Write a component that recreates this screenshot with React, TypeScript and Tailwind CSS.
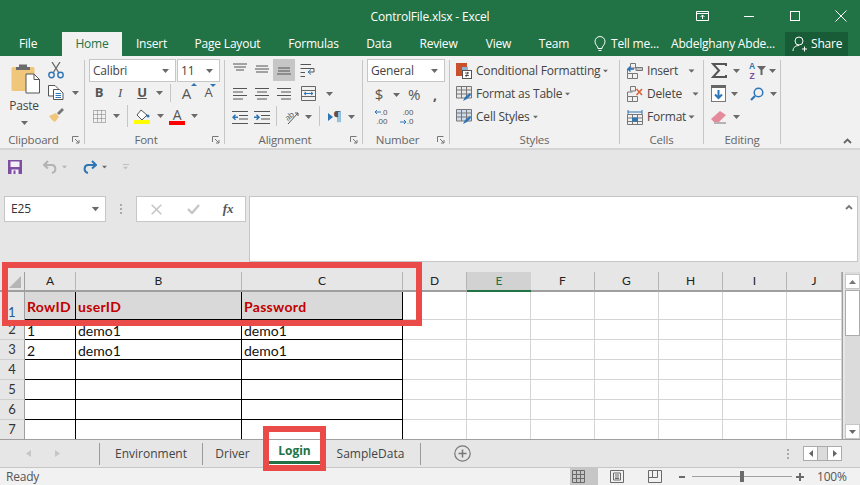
import React from "react";

const Dd = ({ className = "" }: { className?: string }) => (
  <svg width="7" height="4" viewBox="0 0 7 4" className={"shrink-0 " + className}>
    <path d="M0 0H7L3.5 4Z" fill="#6a6a6a" />
  </svg>
);

const Slot = ({ w, children, className = "" }: { w: string; children?: React.ReactNode; className?: string }) => (
  <div className={"flex items-center justify-center shrink-0 " + w + " " + className}>{children}</div>
);

const VSep = ({ className = "" }: { className?: string }) => <div className={"w-px self-stretch bg-[#c6c6c6] shrink-0 " + className} />;

const Launcher = () => (
  <svg width="8" height="8" viewBox="0 0 8 8" className="shrink-0">
    <path d="M.5 6V.5H6.5M3 3L7 7M4 7H7V4" fill="none" stroke="#777" strokeWidth="1" />
  </svg>
);

const Lines = ({ kind }: { kind: string }) => {
  const s = "#555";
  const rows: Record<string, string> = {
    top: "M0 1H14M1 4H13M3 7H11",
    mid: "M1 3H13M0 6H14M1 9H13",
    bot: "M1 5H13M1 8H13M0 11H14",
    left: "M0 1.5H14M0 5H10M0 8.5H14M0 12H10",
    center: "M0 1.5H14M2 5H12M0 8.5H14M2 12H12",
    right: "M0 1.5H14M4 5H14M0 8.5H14M4 12H14",
  };
  return (
    <svg width="14" height="14" viewBox="0 0 14 14">
      <path d={rows[kind]} stroke={s} strokeWidth="1" fill="none" />
    </svg>
  );
};

const Group = ({ w, label, launcher, children, sep = true }: { w: string; label: string; launcher?: boolean; children: React.ReactNode; sep?: boolean }) => (
  <div className={"flex shrink-0 h-full " + w}>
    <div className="flex-1 min-w-0 flex flex-col">
      <div className="flex-1 min-h-0">{children}</div>
      <div className={"relative h-[16px] flex items-center justify-center text-[11.5px] leading-none text-[#666] " + (launcher ? "pr-[17px]" : "")}>
        <span>{label}</span>
        {launcher && (
          <span className="absolute right-[4px] top-[4px]">
            <Launcher />
          </span>
        )}
      </div>
    </div>
    {sep && <div className="w-px h-[84px] mt-[4px] bg-[#c6c6c6]" />}
  </div>
);

const Combo = ({ w, text, textColor = "#444" }: { w: string; text: string; textColor?: string }) => (
  <div className={"h-[23px] bg-white border border-[#c6c6c6] flex items-center justify-between pl-[3px] pr-[6px] text-[12px] shrink-0 " + w} style={{ color: textColor }}>
    <span>{text}</span>
    <Dd />
  </div>
);

const Clipboard = () => (
  <div className="flex h-full">
    <div className="w-[46px] flex flex-col items-center pt-[7px] pl-[5px]">
      <svg width="30" height="31" viewBox="0 0 30 31">
        <rect x="0.5" y="4" width="23" height="24" rx="1.5" fill="#efc67a" />
        <path d="M8 4V1.5H16V4H19V7H5V4Z" fill="#6b6b6b" />
        <path d="M15 11H23L28.5 16.5V30H15Z" fill="#fff" stroke="#555" />
        <path d="M23 11V16.5H28.5" fill="none" stroke="#555" />
      </svg>
      <span className="text-[12px] leading-none text-[#444] mt-[6px] -ml-[3px]">Paste</span>
      <Dd className="mt-[9px] -ml-[3px]" />
    </div>
    <div className="flex flex-col pt-[6px] pl-[2px]">
      <svg width="16" height="17" viewBox="0 0 16 17">
        <path d="M4 0L11 11M12 0L5 11" stroke="#666" strokeWidth="1.3" fill="none" />
        <circle cx="3.5" cy="13" r="2.7" fill="none" stroke="#2e75b6" strokeWidth="1.4" />
        <circle cx="12.5" cy="13" r="2.7" fill="none" stroke="#2e75b6" strokeWidth="1.4" />
      </svg>
      <div className="flex items-center mt-[6px]">
        <svg width="16" height="15" viewBox="0 0 16 15">
          <path d="M.5.5H7L10 3.5V11H.5Z" fill="#fff" stroke="#555" />
          <path d="M5.5 4.5H11.5L15 8V14.5H5.5Z" fill="#fff" stroke="#555" />
          <path d="M7.5 8.5H13M7.5 10.5H13M7.5 12.5H13" stroke="#2e75b6" />
        </svg>
        <Dd className="ml-[8px]" />
      </div>
      <svg width="17" height="16" viewBox="0 0 17 16" className="mt-[7px]">
        <path d="M1 9L8 6L11 10L7 15Q3 13 1 9Z" fill="#efc67a" />
        <path d="M9 6L14 1L16 3L11 8Z" fill="#777" />
      </svg>
    </div>
  </div>
);

const Font = () => (
  <div className="flex flex-col pt-[3px] pl-[4px]">
    <div className="flex gap-px">
      <Combo w="w-[87px]" text="Calibri" />
      <Combo w="w-[43px]" text="11" />
    </div>
    <div className="flex items-center h-[18px] mt-[2px] text-[#555]">
      <Slot w="w-[20px]" className="font-bold text-[13px]">B</Slot>
      <Slot w="w-[22px]" className="italic text-[13px] font-['Liberation_Serif',serif]">I</Slot>
      <Slot w="w-[22px]" className="underline font-bold text-[13px]">U</Slot>
      <Slot w="w-[12px]"><Dd /></Slot>
      <VSep className="ml-[5px]" />
      <Slot w="w-[31px]" className="text-[15px] relative">
        A
        <svg width="6" height="3" viewBox="0 0 6 3" className="absolute top-[1px] right-[5px]"><path d="M0 3H6L3 0Z" fill="#2e75b6" /></svg>
      </Slot>
      <Slot w="w-[13px]" className="text-[13px] relative">
        A
        <svg width="6" height="3" viewBox="0 0 6 3" className="absolute top-[1px] -right-[1px]"><path d="M0 0H6L3 3Z" fill="#2e75b6" /></svg>
      </Slot>
    </div>
    <div className="flex items-center h-[22px] mt-[3px]">
      <Slot w="w-[20px]">
        <svg width="13" height="13" viewBox="0 0 13 13"><path d="M.5.5H12.5V12.5H.5ZM4.5.5V12.5M8.5.5V12.5M.5 4.5H12.5M.5 8.5H12.5" fill="none" stroke="#777" strokeDasharray="1 1" /></svg>
      </Slot>
      <Slot w="w-[15px]"><Dd /></Slot>
      <VSep className="ml-[3px]" />
      <Slot w="w-[28px]">
        <svg width="16" height="15" viewBox="0 0 16 15">
          <path d="M7 1L13 6L8 11L3 6Z" fill="#fff" stroke="#555" />
          <circle cx="14" cy="7" r="1.5" fill="#2e75b6" />
          <rect x="0" y="11" width="16" height="4" fill="#ffff00" />
        </svg>
      </Slot>
      <Slot w="w-[8px]"><Dd /></Slot>
      <Slot w="w-[26px]">
        <div className="flex flex-col items-center">
          <span className="text-[14px] leading-[13px] text-[#555]">A</span>
          <div className="w-[16px] h-[4px] bg-[#ff0000]" />
        </div>
      </Slot>
      <Slot w="w-[8px]"><Dd /></Slot>
    </div>
  </div>
);

const Alignment = () => (
  <div className="flex flex-col pt-[3px] pl-[4px]">
    <div className="flex items-center h-[22px]">
      <Slot w="w-[22px]"><Lines kind="top" /></Slot>
      <Slot w="w-[22px]"><Lines kind="mid" /></Slot>
      <Slot w="w-[22px]" className="h-[22px] bg-[#c6c6c6]"><Lines kind="bot" /></Slot>
      <Slot w="w-[26px]">
        <svg width="16" height="15" viewBox="0 0 16 15"><path d="M.5 1.5H11M.5 5.5H14V9H8M.5 9.5H5M.5 13.5H5" fill="none" stroke="#555" /><path d="M11 6.5L8 9L11 11.5" fill="none" stroke="#2e75b6" /></svg>
      </Slot>
    </div>
    <div className="flex items-center h-[21px] mt-[2px]">
      <Slot w="w-[22px]"><Lines kind="left" /></Slot>
      <Slot w="w-[22px]"><Lines kind="center" /></Slot>
      <Slot w="w-[22px]"><Lines kind="right" /></Slot>
      <Slot w="w-[26px]">
        <svg width="15" height="15" viewBox="0 0 15 15"><path d="M.5.5H14.5V14.5H.5ZM.5 4.5H14.5M.5 10.5H14.5" fill="none" stroke="#666" /><path d="M3 7.5H12M5 6L3 7.5L5 9M10 6L12 7.5L10 9" fill="none" stroke="#2e75b6" /></svg>
      </Slot>
      <Slot w="w-[10px]" className="ml-[3px]"><Dd /></Slot>
    </div>
    <div className="flex items-center h-[22px] mt-[2px]">
      <Slot w="w-[22px]">
        <svg width="16" height="13" viewBox="0 0 16 13"><path d="M0 .5H16M7 4.5H16M7 8H16M0 12.5H16" stroke="#555" fill="none" /><path d="M6 6.3H1M3.5 3.8L1 6.3L3.5 8.8" stroke="#2e75b6" strokeWidth="1.5" fill="none" /></svg>
      </Slot>
      <Slot w="w-[22px]">
        <svg width="16" height="13" viewBox="0 0 16 13"><path d="M0 .5H16M7 4.5H16M7 8H16M0 12.5H16" stroke="#555" fill="none" /><path d="M0 6.3H5M2.5 3.8L5 6.3L2.5 8.8" stroke="#2e75b6" strokeWidth="1.5" fill="none" /></svg>
      </Slot>
      <VSep className="ml-[3px] h-[20px] self-center" />
      <Slot w="w-[28px]">
        <svg width="18" height="17" viewBox="0 0 18 17"><text x="3" y="11" fontSize="8" fill="#555" transform="rotate(-40 6 8)">ab</text><path d="M6 15L16 4M13 4H16V7" fill="none" stroke="#555" /></svg>
      </Slot>
      <Slot w="w-[6px]"><Dd /></Slot>
      <VSep className="ml-[8px] h-[20px] self-center" />
      <Slot w="w-[30px]" className="text-[13px] text-[#555]">
        <svg width="5" height="8" viewBox="0 0 5 8"><path d="M0 0L5 4L0 8Z" fill="#2e75b6" /></svg>¶
      </Slot>
      <Slot w="w-[3px]"><Dd /></Slot>
    </div>
  </div>
);

const decimal = "flex items-center justify-end text-[8px] leading-[9.5px] tracking-normal text-[#555] font-['Liberation_Sans',sans-serif]";

const NumberGroup = () => (
  <div className="flex flex-col pt-[3px] pl-[4px]">
    <Combo w="w-[78px]" text="General" />
    <div className="flex items-center h-[21px] mt-[2px] text-[#555]">
      <Slot w="w-[24px]" className="text-[15px]">$</Slot>
      <Slot w="w-[10px]"><Dd /></Slot>
      <Slot w="w-[26px]" className="text-[15px]">%</Slot>
      <Slot w="w-[16px]" className="text-[14px] font-bold leading-none">,</Slot>
    </div>
    <div className="flex items-center h-[22px] mt-[1px]">
      <Slot w="w-[26px]">
        <div className="w-[15px] flex flex-col">
          <div className={decimal}>
            <svg width="7" height="6" viewBox="0 0 7 6" className="shrink-0"><path d="M7 3H1M3 1L1 3L3 5" fill="none" stroke="#2e75b6" /></svg>
            <span>.0</span>
          </div>
          <div className={decimal}><span>.00</span></div>
        </div>
      </Slot>
      <Slot w="w-[26px]">
        <div className="w-[15px] flex flex-col">
          <div className={decimal}><span>.00</span></div>
          <div className={decimal}>
            <svg width="7" height="6" viewBox="0 0 7 6" className="shrink-0"><path d="M0 3H6M4 1L6 3L4 5" fill="none" stroke="#2e75b6" /></svg>
            <span>.0</span>
          </div>
        </div>
      </Slot>
    </div>
  </div>
);

const StyleRow = ({ icon, text, gap = "ml-[2px]" }: { icon: React.ReactNode; text: string; gap?: string }) => (
  <div className="flex items-center h-[23px] text-[12px] text-[#444] whitespace-nowrap">
    <span className="w-[17px] flex shrink-0">{icon}</span>
    <span className="ml-[3px]">{text}</span>
    <Dd className={gap + " scale-75"} />
  </div>
);

const TableIcon = ({ fill }: { fill: string }) => (
  <svg width="16" height="16" viewBox="0 0 16 16">
    <path d="M.5.5H15.5V12H.5ZM5.5.5V12M10.5.5V12M.5 4H15.5M.5 8H15.5" fill={fill} stroke="#777" />
    <path d="M7 15L9 11L14 7L15 9L11 13Z" fill="#2e75b6" />
  </svg>
);

const Styles = () => (
  <div className="flex flex-col pt-[3px] pl-[6px]">
    <StyleRow
      text="Conditional Formatting"
      icon={
        <svg width="16" height="16" viewBox="0 0 16 16">
          <rect x="0" y="0" width="11" height="4" fill="#c8502c" />
          <rect x="0" y="4" width="6" height="9" fill="#c8502c" />
          <rect x="6" y="4" width="6" height="4" fill="#2e75b6" opacity="0.5" />
          <rect x="6.5" y="7.5" width="9" height="8" fill="#fff" stroke="#555" />
          <path d="M9 10H13M9 12.5H13M10 14L12 9" stroke="#333" fill="none" strokeWidth="0.8" />
        </svg>
      }
    />
    <StyleRow text="Format as Table" icon={<TableIcon fill="#e8e8e8" />} />
    <StyleRow text="Cell Styles" icon={<TableIcon fill="#cfdcec" />} />
  </div>
);

const CellIcon = ({ kind }: { kind: string }) => (
  <svg width="16" height="16" viewBox="0 0 16 16">
    {kind === "format" ? (
      <>
        <path d="M1 3H15M1 1V5M15 1V5" stroke="#2e75b6" fill="none" />
        <path d="M.5 5.5H15.5V15.5H.5ZM.5 9H15.5M.5 12.5H15.5M5.5 5.5V15.5M10.5 5.5V15.5" stroke="#777" fill="none" />
        <rect x="5" y="8.5" width="6" height="4" fill="#2e75b6" />
      </>
    ) : (
      <>
        <path d="M3.5.5H8.5V5H3.5ZM.5 10.5H5.5V15.5H.5ZM5.5 10.5H10.5V15.5H5.5ZM.5 10.5V6H5.5" stroke="#777" fill="none" />
        {kind === "insert" ? (
          <>
            <path d="M9 7.5H15.5V4.5H9Z" fill="#c6c6c6" stroke="#777" />
            <path d="M7 6H1M3.5 3.5L1 6L3.5 8.5" stroke="#2e75b6" strokeWidth="1.5" fill="none" />
          </>
        ) : (
          <path d="M9.5 3L15 9M15 3L9.5 9" stroke="#d9603a" strokeWidth="1.6" />
        )}
      </>
    )}
  </svg>
);

const CellRow = ({ kind, text, dd }: { kind: string; text: string; dd: string }) => (
  <div className="flex items-center h-[23px] text-[12px] text-[#444]">
    <CellIcon kind={kind} />
    <span className="ml-[4px]">{text}</span>
    <Dd className={dd} />
  </div>
);

const Cells = () => (
  <div className="flex flex-col pt-[3px] pl-[7px]">
    <CellRow kind="insert" text="Insert" dd="ml-[10px] scale-90" />
    <CellRow kind="delete" text="Delete" dd="ml-[10px] scale-90" />
    <CellRow kind="format" text="Format" dd="ml-[2px] scale-90" />
  </div>
);

const Editing = () => (
  <div className="flex flex-col pt-[3px] pl-[7px]">
    <div className="flex items-center h-[23px]">
      <svg width="16" height="15" viewBox="0 0 16 15"><path d="M15 3V1H2L8 7.5L2 14H15V12" fill="none" stroke="#555" strokeWidth="2" /></svg>
      <Dd className="ml-[6px]" />
      <div className="ml-[8px] w-[8px] flex flex-col items-center text-[8.5px] leading-[10px] font-bold tracking-normal font-['Liberation_Sans',sans-serif]">
        <span className="text-[#2e75b6]">A</span>
        <span className="text-[#7e4ea3]">Z</span>
      </div>
      <svg width="9" height="9" viewBox="0 0 9 9" className="ml-[1px]"><path d="M0 0H9L5.5 4V9H3.5V4Z" fill="#666" /></svg>
      <Dd className="ml-[3px]" />
    </div>
    <div className="flex items-center h-[23px]">
      <svg width="15" height="17" viewBox="0 0 15 17"><rect x=".5" y="0.5" width="14" height="16" fill="#fff" stroke="#777" /><rect x="0" y="0" width="15" height="3" fill="#666" /><path d="M7.5 5V13M4 9.5L7.5 13L11 9.5" stroke="#2e75b6" strokeWidth="2" fill="none" /></svg>
      <Dd className="ml-[5px]" />
      <svg width="14" height="14" viewBox="0 0 14 14" className="ml-[12px]"><circle cx="8.5" cy="5.5" r="4.3" fill="none" stroke="#2e75b6" strokeWidth="1.5" /><path d="M5 9L1 13" stroke="#2e75b6" strokeWidth="2.2" /></svg>
      <Dd className="ml-[6px]" />
    </div>
    <div className="flex items-center h-[23px]">
      <svg width="16" height="14" viewBox="0 0 16 14"><path d="M0 9L9 1L15 5L8 12H3Z" fill="#e58a9a" /><path d="M3 13H15" stroke="#777" /></svg>
      <Dd className="ml-[6px]" />
    </div>
  </div>
);

const COLS = "grid-cols-[25px_51px_166px_161px_64px_64px_64px_64px_64px_64px_55px]";
const LETTERS = ["A", "B", "C", "D", "E", "F", "G", "H", "I", "J"];

const ColHead = ({ l }: { l: string }) => {
  const sel = l === "E";
  return (
    <div className={"h-[20px] flex items-center justify-center text-[12px] border-b-2 " + (sel ? "bg-[#d2d2d2] border-[#217346] text-[#217346]" : "border-[#9f9f9f] border-r border-r-[#b5b5b5] text-[#222]")}>
      {l}
    </div>
  );
};

const dataCell = "bg-white border-r border-b border-black flex items-center pl-[2px] pt-[1px] text-[14px] text-[#111] overflow-hidden whitespace-nowrap";
const blankCell = "bg-white border-r border-b border-[#d4d4d4]";

const Row = ({ n, cells, h }: { n: number; cells: string[]; h: string }) => (
  <>
    <div className={"bg-[#e6e6e6] border-r border-r-[#9f9f9f] border-b border-b-[#cfcfcf] flex items-center justify-center text-[13px] text-[#333] " + h}>{n}</div>
    {cells.map((c, i) => (
      <div key={i} className={dataCell + " " + h}>{c}</div>
    ))}
    {LETTERS.slice(3).map((l) => (
      <div key={l} className={blankCell + " " + h} />
    ))}
  </>
);

const Sep = () => <div className="w-px h-[22px] bg-[#9a9a9a] shrink-0" />;

export default function App() {
  return (
    <div className="relative w-[860px] h-[485px] overflow-hidden bg-[#e6e6e6] text-[12px] font-['Open_Sans',sans-serif] tracking-[-0.2px]">
      {/* title */}
      <div className="h-[32px] bg-[#217346] text-white grid grid-cols-[1fr_auto_1fr] items-center">
        <div />
        <div className="text-[12px] pt-[2px]">ControlFile.xlsx - Excel</div>
        <div className="flex justify-end items-center pr-[13px]">
          <svg width="13" height="10" viewBox="0 0 13 10" className="mr-[35px]"><path d="M.5.5H12.5V9.5H.5ZM.5 2.5H12.5M6.5 8V4M4.5 6L6.5 4L8.5 6" fill="none" stroke="#fff" /></svg>
          <div className="w-[10px] h-px bg-white mr-[36px]" />
          <div className="w-[10px] h-[10px] border border-white mr-[35px]" />
          <svg width="12" height="12" viewBox="0 0 12 12"><path d="M.5.5L11.5 11.5M11.5.5L.5 11.5" stroke="#fff" /></svg>
        </div>
      </div>
      {/* tabs */}
      <div className="h-[24px] bg-[#217346] text-white flex items-center text-[12px] whitespace-nowrap">
        <div className="w-[62px] pl-[19px]">File</div>
        <div className="w-[60px] h-full bg-[#f1f1f1] text-[#217346] flex items-center justify-center">Home</div>
        <div className="w-[59px] text-center">Insert</div>
        <div className="w-[93px] text-center">Page Layout</div>
        <div className="w-[79px] text-center">Formulas</div>
        <div className="w-[52px] text-center">Data</div>
        <div className="w-[67px] text-center">Review</div>
        <div className="w-[53px] text-center">View</div>
        <div className="w-[58px] text-center">Team</div>
        <svg width="12" height="17" viewBox="0 0 12 17" className="ml-[11px]"><path d="M4 12.5C4 10 1 9 1 5.5A5 5 0 0 1 11 5.5C11 9 8 10 8 12.5ZM4.5 14.5H7.5" fill="none" stroke="#fff" /></svg>
        <div className="ml-[5px] w-[60px]">Tell me...</div>
        <div className="w-[114px] text-[12px]">Abdelghany Abde...</div>
        <div className="w-[63px] h-full bg-[#185c37] flex items-center pl-[7px]">
          <svg width="15" height="16" viewBox="0 0 15 16"><circle cx="7" cy="5" r="4" fill="none" stroke="#fff" /><path d="M1 15C1 11 4 9.5 7 9.5M10 13H15M12.5 10.5V15.5" fill="none" stroke="#fff" /></svg>
          <span className="ml-[4px]">Share</span>
        </div>
      </div>
      {/* ribbon */}
      <div className="relative h-[94px] bg-[#f1f1f1] border-b-2 border-[#d4d4d4] flex">
        <Group w="w-[85px]" label="Clipboard" launcher><Clipboard /></Group>
        <Group w="w-[140px]" label="Font" launcher><Font /></Group>
        <Group w="w-[138px]" label="Alignment" launcher><Alignment /></Group>
        <Group w="w-[87px]" label="Number" launcher><NumberGroup /></Group>
        <Group w="w-[170px]" label="Styles"><Styles /></Group>
        <Group w="w-[84px]" label="Cells"><Cells /></Group>
        <Group w="w-[77px]" label="Editing"><Editing /></Group>
        <svg width="9" height="6" viewBox="0 0 9 6" className="absolute right-[8px] top-[82px]"><path d="M1 5L4.5 1.5L8 5" fill="none" stroke="#666" strokeWidth="1.8" /></svg>
      </div>
      {/* quick access */}
      <div className="h-[36px] flex items-center pl-[8px] pb-[3px]">
        <svg width="14" height="14" viewBox="0 0 14 14"><path d="M0 0H14V14H0Z" fill="#7e4ea3" /><rect x="2.5" y="1.5" width="9" height="5.5" fill="#f3eef7" /><rect x="3.5" y="9.5" width="7" height="4.5" fill="#f3eef7" /><rect x="5.5" y="10.5" width="2" height="3.5" fill="#7e4ea3" /></svg>
        <svg width="15" height="14" viewBox="0 0 15 14" className="ml-[21px]"><path d="M5 1L1 5L5 8.5M1 5H9C13 5 14 12 9 13" fill="none" stroke="#b4b4b4" strokeWidth="2" /></svg>
        <Dd className="ml-[3px] opacity-40 scale-75" />
        <svg width="15" height="14" viewBox="0 0 15 14" className="ml-[14px]"><path d="M10 1L14 5L10 8.5M14 5H6C2 5 1 12 6 13" fill="none" stroke="#2e75b6" strokeWidth="2" /></svg>
        <Dd className="ml-[4px] scale-75" />
        <div className="ml-[14px] flex flex-col items-center gap-[1px] opacity-30">
          <div className="w-[6px] h-px bg-[#666]" />
          <Dd className="scale-75" />
        </div>
      </div>
      {/* formula bar */}
      <div className="h-[86px] pt-[10px] flex items-start pl-[4px]">
        <div className="w-[102px] h-[26px] bg-white border border-[#c6c6c6] flex items-center justify-between pl-[6px] pr-[6px] text-[12px] text-[#333]">
          <span>E25</span>
          <Dd className="scale-110" />
        </div>
        <div className="w-[30px] h-[26px] flex flex-col items-center justify-center gap-[2px]">
          <div className="w-[2px] h-[2px] bg-[#aaa]" />
          <div className="w-[2px] h-[2px] bg-[#aaa]" />
          <div className="w-[2px] h-[2px] bg-[#aaa]" />
        </div>
        <div className="w-[110px] h-[26px] bg-white border border-[#c6c6c6] flex items-center">
          <Slot w="w-[37px] ml-[1px]">
            <svg width="11" height="11" viewBox="0 0 11 11"><path d="M.7.7L10.3 10.3M10.3.7L.7 10.3" stroke="#c6c6c6" strokeWidth="1.6" /></svg>
          </Slot>
          <Slot w="w-[36px]">
            <svg width="13" height="10" viewBox="0 0 13 10"><path d="M1 5L5 9L12 1" fill="none" stroke="#c6c6c6" strokeWidth="2.4" /></svg>
          </Slot>
          <Slot w="w-[34px]" className="font-['Liberation_Serif',serif] italic text-[13px] text-[#555] font-bold">fx</Slot>
        </div>
        <div className="relative ml-[3px] w-[609px] h-[66px] bg-white border border-[#c6c6c6]" />
        <svg width="8" height="6" viewBox="0 0 8 6" className="absolute left-[845px] top-[204px]"><path d="M1 5L4 2L7 5" fill="none" stroke="#777" strokeWidth="1.8" /></svg>
      </div>
      {/* sheet */}
      <div className="h-[167px] flex overflow-hidden">
        <div className={"grid w-[843px] shrink-0 content-start border-r border-[#9f9f9f] text-[#111] font-['Lato','Liberation_Sans',sans-serif] tracking-normal " + COLS}>
          <div className="h-[20px] border-b-2 border-r border-[#9f9f9f] flex items-start justify-end pr-[3px] pt-[4px]">
            <svg width="12" height="12" viewBox="0 0 12 12"><path d="M12 0V12H0Z" fill="#b5b5b5" /></svg>
          </div>
          {LETTERS.map((l) => (
            <ColHead key={l} l={l} />
          ))}
          <div className="h-[28px] bg-[#e6e6e6] border-r border-[#9f9f9f] flex items-end justify-start pl-[8px] text-[13px] leading-[16px] text-[#26588f]">1</div>
          {["RowID", "userID", "Password"].map((t) => (
            <div key={t} className="h-[28px] bg-[#d9d9d9] border-r border-b border-black flex items-center pl-[2px] pt-[1px] font-bold text-[14px] tracking-[0.3px] text-[#c00000] whitespace-nowrap overflow-hidden">
              {t}
            </div>
          ))}
          {LETTERS.slice(3).map((l) => (
            <div key={l} className={blankCell + " h-[28px]"} />
          ))}
          <Row n={2} h="h-[20px]" cells={["1", "demo1", "demo1"]} />
          <Row n={3} h="h-[20px]" cells={["2", "demo1", "demo1"]} />
          <Row n={4} h="h-[20px]" cells={["", "", ""]} />
          <Row n={5} h="h-[20px]" cells={["", "", ""]} />
          <Row n={6} h="h-[20px]" cells={["", "", ""]} />
          <Row n={7} h="h-[20px]" cells={["", "", ""]} />
        </div>
        {/* scrollbar */}
        <div className="ml-[2px] w-[15px] bg-[#dbdbdb] flex flex-col">
          <div className="h-[15px] mt-[2px] bg-white border border-[#c6c6c6] flex items-center justify-center">
            <svg width="7" height="4" viewBox="0 0 7 4"><path d="M0 4H7L3.5 0Z" fill="#777" /></svg>
          </div>
          <div className="h-[46px] mt-[1px] bg-white border border-[#ababab]" />
          <div className="flex-1" />
          <div className="h-[15px] bg-white border border-[#c6c6c6] flex items-center justify-center">
            <Dd />
          </div>
        </div>
      </div>
      {/* sheet tabs */}
      <div className="h-[28px] bg-[#e6e6e6] border-t border-[#9f9f9f] flex items-center text-[12px] text-[#444] whitespace-nowrap tracking-normal">
        <div className="w-[99px] flex shrink-0 items-center pl-[26px]">
          <svg width="5" height="7" viewBox="0 0 5 7"><path d="M5 0V7L0 3.5Z" fill="#c6c6c6" /></svg>
          <svg width="5" height="7" viewBox="0 0 5 7" className="ml-[24px]"><path d="M0 0V7L5 3.5Z" fill="#c6c6c6" /></svg>
        </div>
        <Sep />
        <div className="w-[102px] text-center">Environment</div>
        <Sep />
        <div className="w-[66px] text-center pr-[7px]">Driver</div>
        <div className="w-[51px] h-[25px] self-start bg-white pb-[1px] flex">
          <div className="flex-1 border-b-[3px] border-[#217346] text-[#217346] font-bold flex items-center justify-center">Login</div>
        </div>
        <div className="w-[100px] text-center pl-[1px]">SampleData</div>
        <Sep />
        <svg width="17" height="17" viewBox="0 0 17 17" className="ml-[33px]"><circle cx="8.5" cy="8.5" r="7.7" fill="none" stroke="#777" strokeWidth="1.2" /><path d="M8.5 4.5V12.5M4.5 8.5H12.5" stroke="#777" strokeWidth="1.5" /></svg>
        <div className="flex-1" />
        <div className="flex flex-col gap-[2px] mr-[14px]">
          <div className="w-[2px] h-[2px] bg-[#aaa]" />
          <div className="w-[2px] h-[2px] bg-[#aaa]" />
          <div className="w-[2px] h-[2px] bg-[#aaa]" />
        </div>
        <div className="w-[39px] h-[15px] bg-[#dbdbdb] border border-[#ababab] flex justify-between mr-[18px]">
          <div className="w-[14px] bg-white flex items-center justify-center border-r border-[#ababab]">
            <svg width="4" height="7" viewBox="0 0 4 7"><path d="M4 0V7L0 3.5Z" fill="#666" /></svg>
          </div>
          <div className="w-[14px] bg-white flex items-center justify-center border-l border-[#ababab]">
            <svg width="4" height="7" viewBox="0 0 4 7"><path d="M0 0V7L4 3.5Z" fill="#666" /></svg>
          </div>
        </div>
      </div>
      {/* status */}
      <div className="h-[18px] bg-[#f1f1f1] border-t border-[#c6c6c6] flex items-center text-[12px] text-[#555] whitespace-nowrap">
        <div className="pl-[6px] w-[570px]">Ready</div>
        <div className="w-[28px] h-full bg-[#c6c6c6] flex items-center pl-[2px]">
          <svg width="13" height="13" viewBox="0 0 13 13"><path d="M.5.5H12.5V12.5H.5ZM4.5.5V12.5M8.5.5V12.5M.5 4.5H12.5M.5 8.5H12.5" fill="none" stroke="#6a6a6a" /></svg>
        </div>
        <svg width="14" height="13" viewBox="0 0 14 13" className="ml-[12px]"><path d="M.5.5H13.5V12.5H.5ZM3.5 3H10.5V10H3.5ZM5 5H9M5 7H9M5 8.5H9" fill="none" stroke="#6a6a6a" /></svg>
        <svg width="14" height="13" viewBox="0 0 14 13" className="ml-[24px]"><path d="M.5.5H13.5V12.5H.5ZM.5 7.5H9.5V.5M4.5.5V7.5" fill="none" stroke="#6a6a6a" /></svg>
        <div className="w-[6px] h-[2px] bg-[#6a6a6a] ml-[17px]" />
        <div className="ml-[7px] w-[100px] h-px bg-[#a0a0a0] relative flex justify-center">
          <div className="absolute top-[-5px] w-[4px] h-[11px] bg-[#6a6a6a]" />
        </div>
        <svg width="8" height="8" viewBox="0 0 8 8" className="ml-[4px]"><path d="M4 0V8M0 4H8" stroke="#6a6a6a" strokeWidth="2" /></svg>
        <div className="ml-[13px] text-[12px]">100%</div>
      </div>

      {/* red annotation frames */}
      <div className="absolute left-[2px] top-[262px] w-[420px] h-[64px] border-[6px] border-[#ea4b48]" />
      <div className="absolute left-[263px] top-[426px] w-[63px] h-[45px] border-[6px] border-[#ea4b48]" />
    </div>
  );
}
